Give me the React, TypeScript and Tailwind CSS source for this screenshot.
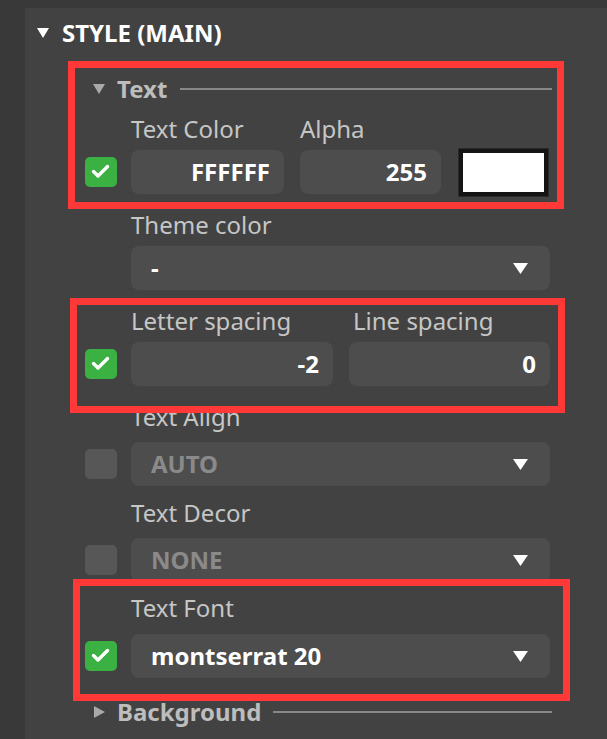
import React from "react";

const FONT = { fontFamily: '"Noto Sans", "Open Sans", sans-serif' };

function Check({ on }: { on: boolean }) {
  if (!on) {
    return <div className="w-[32px] h-[30px] rounded-[5px] bg-[#575757] shrink-0" />;
  }
  return (
    <div className="w-[32px] h-[30px] rounded-[5px] bg-[#3bb043] shrink-0 flex items-center justify-center">
      <svg width="32" height="30" viewBox="0 0 32 30">
        <path d="M8.5 14.5 L13 19 L22.5 9.5" fill="none" stroke="#ffffff" strokeWidth="3.4" strokeLinecap="round" strokeLinejoin="round" />
      </svg>
    </div>
  );
}

function DownTri({ color = "#ffffff", w = 15, h = 11 }: { color?: string; w?: number; h?: number }) {
  return (
    <svg width={w} height={h} viewBox={`0 0 ${w} ${h}`} className="shrink-0">
      <polygon points={`0,0 ${w},0 ${w / 2},${h}`} fill={color} />
    </svg>
  );
}

function Dropdown({ value, dim }: { value: string; dim?: boolean }) {
  return (
    <div className="ml-[14px] w-[419px] h-[44px] rounded-[8px] bg-[#4d4d4d] flex items-center justify-between pl-[20px] pr-[22px]">
      <span className={`text-[24px] font-bold leading-[32px] ${dim ? "text-[#8a8a8a]" : "text-white"}`}>{value}</span>
      <DownTri />
    </div>
  );
}

function Label({ children, className = "" }: { children: React.ReactNode; className?: string }) {
  return <div className={`h-[32px] leading-[32px] text-[24px] text-[#c6c6c6] whitespace-nowrap ${className}`}>{children}</div>;
}

function Field({ children, align = "right", w }: { children: React.ReactNode; align?: string; w: string }) {
  return (
    <div className={`${w} h-[44px] rounded-[8px] bg-[#4d4d4d] flex items-center ${align === "right" ? "justify-end pr-[14px]" : "pl-[20px]"}`}>
      <span className="text-[24px] font-bold leading-[32px] text-white">{children}</span>
    </div>
  );
}

export default function App() {
  return (
    <div className="relative w-[607px] h-[739px] bg-[#393939] overflow-hidden" style={FONT}>
      <div className="ml-[25px] mt-[8px] h-[731px] bg-[#424242] pt-[9px]">
        {/* STYLE (MAIN) header */}
        <div className="h-[32px] flex items-center pl-[12px]">
          <DownTri w={12} h={10} />
          <span className="ml-[13px] text-[24px] font-bold leading-[32px] text-white">STYLE (MAIN)</span>
        </div>

        {/* Text sub header */}
        <div className="mt-[24px] h-[32px] flex items-center pl-[68px] pr-[55px]">
          <DownTri w={12} h={10} color="#a9a9a9" />
          <span className="ml-[12px] text-[24px] font-bold leading-[32px] text-[#bdbdbd]">Text</span>
          <div className="ml-[13px] flex-1 h-[2px] bg-[#888888]" />
        </div>

        {/* Text Color / Alpha */}
        <div className="mt-[8px] pl-[60px]">
          <div className="flex ml-[46px]">
            <Label className="w-[169px]">Text Color</Label>
            <Label>Alpha</Label>
          </div>
          <div className="mt-[5px] h-[44px] flex items-center">
            <Check on />
            <div className="ml-[14px] h-[44px] flex items-center">
              <Field w="w-[153px]">FFFFFF</Field>
              <div className="ml-[16px]">
                <Field w="w-[141px]">255</Field>
              </div>
              <div className="ml-[18px] w-[89px] h-[47px] shrink-0 border-[4px] border-[#141414] bg-white outline outline-1 outline-[#2a2a2a]" />
            </div>
          </div>
        </div>

        {/* Theme color */}
        <div className="mt-[15px] pl-[60px]">
          <Label className="ml-[46px]">Theme color</Label>
          <div className="mt-[5px] flex items-center">
            <div className="w-[32px] h-[30px] shrink-0" />
            <Dropdown value="-" />
          </div>
        </div>

        {/* Letter spacing / Line spacing */}
        <div className="mt-[15px] pl-[60px]">
          <div className="flex ml-[46px]">
            <Label className="w-[222px]">Letter spacing</Label>
            <Label>Line spacing</Label>
          </div>
          <div className="mt-[5px] flex items-center">
            <Check on />
            <div className="ml-[14px] flex items-center">
              <Field w="w-[202px]">-2</Field>
              <div className="ml-[16px]">
                <Field w="w-[201px]">0</Field>
              </div>
            </div>
          </div>
        </div>

        {/* Text Align */}
        <div className="mt-[15px] pl-[60px]">
          <Label className="ml-[46px]">Text Align</Label>
          <div className="mt-[9px] flex items-center">
            <Check on={false} />
            <Dropdown value="AUTO" dim />
          </div>
        </div>

        {/* Text Decor */}
        <div className="mt-[11px] pl-[60px]">
          <Label className="ml-[46px]">Text Decor</Label>
          <div className="mt-[9px] flex items-center">
            <Check on={false} />
            <Dropdown value="NONE" dim />
          </div>
        </div>

        {/* Text Font */}
        <div className="mt-[10px] pl-[60px]">
          <Label className="ml-[46px]">Text Font</Label>
          <div className="mt-[10px] flex items-center">
            <Check on />
            <Dropdown value="montserrat 20" />
          </div>
        </div>

        {/* Background */}
        <div className="mt-[18px] h-[32px] flex items-center pl-[69px] pr-[55px]">
          <svg width="11" height="12" viewBox="0 0 11 12" className="shrink-0">
            <polygon points="0,0 11,6 0,12" fill="#a9a9a9" />
          </svg>
          <span className="ml-[12px] text-[24px] font-bold leading-[32px] text-[#bdbdbd]">Background</span>
          <div className="ml-[12px] flex-1 h-[2px] bg-[#888888]" />
        </div>
      </div>

      {/* Red annotation boxes */}
      <div className="absolute left-[68px] top-[61px] w-[496px] h-[148px] border-[7px] border-[#ff3838] pointer-events-none" />
      <div className="absolute left-[70px] top-[298px] w-[495px] h-[115px] border-[7px] border-[#ff3838] pointer-events-none" />
      <div className="absolute left-[73px] top-[579px] w-[497px] h-[122px] border-[7px] border-[#ff3838] pointer-events-none" />
    </div>
  );
}
